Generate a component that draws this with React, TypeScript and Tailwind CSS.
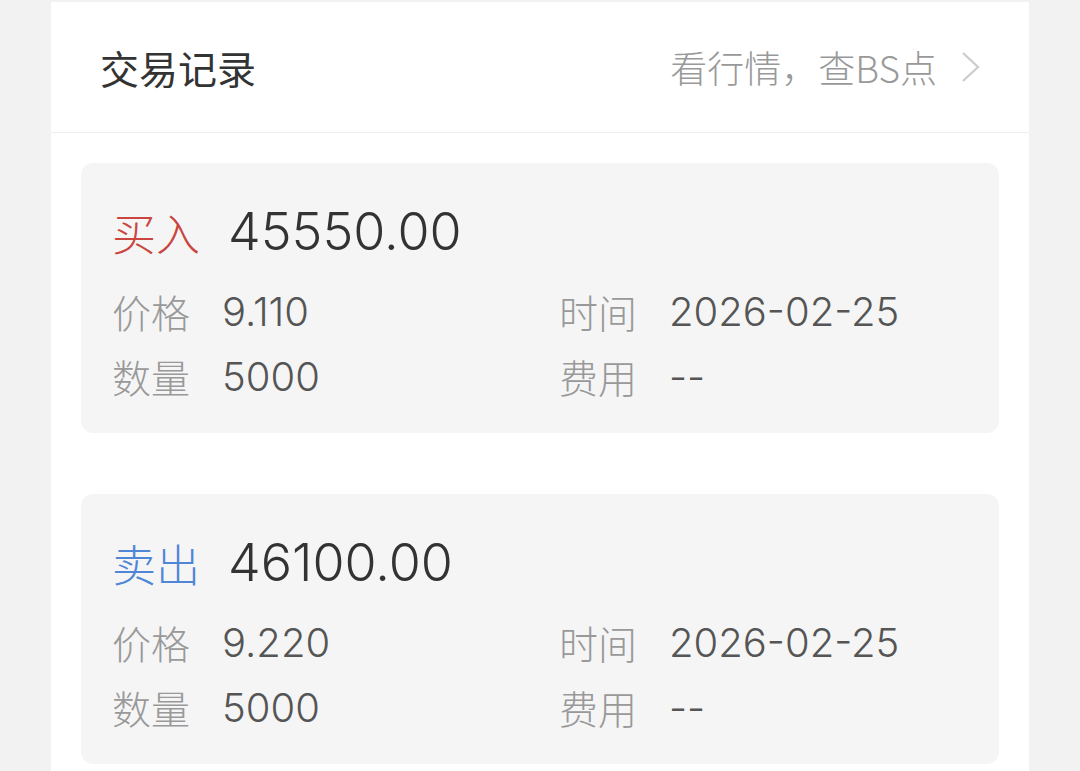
import React from "react";

const cjk = { fontFamily: '"Noto Sans CJK SC", "Noto Sans", sans-serif' };
const num = { fontFamily: 'Inter, "Noto Sans CJK SC", sans-serif' };

type Rec = {
  side: string;
  color: string;
  amount: string;
  price: string;
  time: string;
  qty: string;
  fee: string;
};

const records: Rec[] = [
  { side: "买入", color: "text-[#c9453e]", amount: "45550.00", price: "9.110", time: "2026-02-25", qty: "5000", fee: "--" },
  { side: "卖出", color: "text-[#4f86d6]", amount: "46100.00", price: "9.220", time: "2026-02-25", qty: "5000", fee: "--" },
];

function Field({ label, value }: { label: string; value: string }) {
  return (
    <div className="flex items-center h-[65px]">
      <span className="text-[39px] leading-none font-light text-[#999999] w-[78px]" style={cjk}>
        {label}
      </span>
      <span className="ml-[32px] text-[40px] leading-none font-[350] text-[#555555]" style={num}>
        {value}
      </span>
    </div>
  );
}

function Card({ r }: { r: Rec }) {
  return (
    <div className="h-[270px] rounded-[12px] bg-[#f5f5f5] pl-[31px] pt-[40px]">
      <div className="flex items-center h-[58px]">
        <span className={`text-[44px] leading-none font-light ${r.color}`} style={cjk}>
          {r.side}
        </span>
        <span className="ml-[28px] text-[52px] leading-none font-[350] text-[#333333]" style={num}>
          {r.amount}
        </span>
      </div>
      <div className="mt-[18px] grid grid-cols-[447px_1fr]">
        <Field label="价格" value={r.price} />
        <Field label="时间" value={r.time} />
        <Field label="数量" value={r.qty} />
        <Field label="费用" value={r.fee} />
      </div>
    </div>
  );
}

export default function App() {
  return (
    <div className="min-h-[771px] w-[1080px] bg-[#f2f2f2] pt-[2px] overflow-hidden">
      <div className="ml-[51px] w-[978px] bg-white min-h-[769px]">
        <div className="h-[131px] flex items-center justify-between pl-[49px] pr-[48px] border-b border-[#eeeeee]">
          <span className="text-[39px] leading-none text-[#333333]" style={cjk}>
            交易记录
          </span>
          <div className="flex items-center">
            <span className="text-[37px] leading-none font-light text-[#999999]" style={cjk}>
              看行情，查BS点
            </span>
            <svg width="20" height="32" viewBox="0 0 20 32" className="ml-[24px]">
              <path d="M2 2 L17 16 L2 30" fill="none" stroke="#cccccc" strokeWidth="2.2" />
            </svg>
          </div>
        </div>
        <div className="px-[30px] pt-[30px] flex flex-col gap-[61px]">
          {records.map((r, i) => (
            <Card key={i} r={r} />
          ))}
        </div>
      </div>
    </div>
  );
}
